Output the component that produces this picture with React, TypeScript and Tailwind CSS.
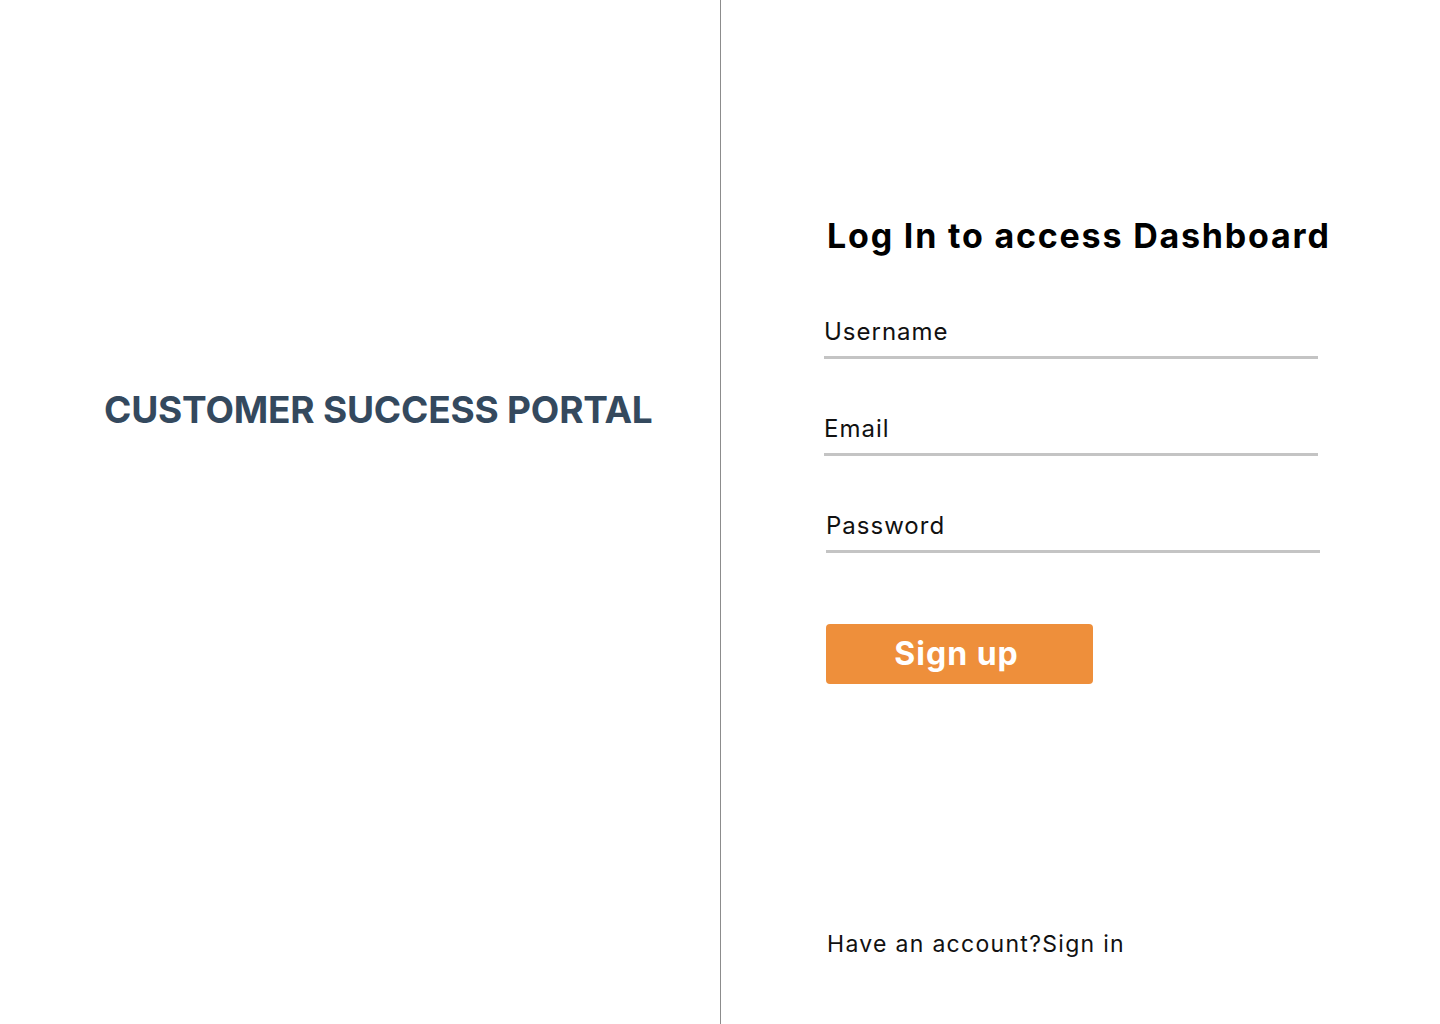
import { useState } from 'react';

export default function App() {
  const [username, setUsername] = useState('');
  const [email, setEmail] = useState('');
  const [password, setPassword] = useState('');

  const inputClass =
    "w-full bg-transparent border-b-[3px] border-[#c4c4c4] pt-[2px] pb-[9px] text-[24px] leading-[30px] tracking-[1px] text-[#111] outline-none placeholder:text-[#111]";

  return (
    <div className="flex h-[1024px] w-[1440px] bg-white font-['Inter',sans-serif] text-[#111]">
      {/* Left panel */}
      <div className="w-[721px] shrink-0 border-r border-[#8c8c8c] pl-[104px] pt-[386px]">
        <h1 className="text-[37px] leading-[48px] font-bold tracking-[-0.2px] text-[#34495e]">
          CUSTOMER SUCCESS PORTAL
        </h1>
      </div>

      {/* Right panel */}
      <div className="flex flex-1 flex-col pl-[103px] pt-[215px] pb-[65px]">
        <h2 className="pl-[3px] text-[34px] leading-[41px] font-bold tracking-[1.8px] text-black">
          Log In to access Dashboard
        </h2>

        <form className="mt-[59px] flex flex-col" onSubmit={(e) => e.preventDefault()}>
          <div className="w-[494px]">
            <input
              className={inputClass}
              placeholder="Username"
              value={username}
              onChange={(e) => setUsername(e.target.value)}
            />
          </div>
          <div className="mt-[53px] w-[494px]">
            <input
              className={inputClass}
              placeholder="Email"
              value={email}
              onChange={(e) => setEmail(e.target.value)}
            />
          </div>
          <div className="mt-[53px] ml-[2px] w-[494px]">
            <input
              type="password"
              className={inputClass}
              placeholder="Password"
              value={password}
              onChange={(e) => setPassword(e.target.value)}
            />
          </div>

          <button
            type="submit"
            className="mt-[71px] ml-[2px] h-[60px] w-[267px] rounded-[4px] bg-[#ee8f3b] pr-[6px] text-[32px] font-bold tracking-[1px] text-white"
          >
            Sign up
          </button>
        </form>

        <div className="mt-auto pl-[3px] text-[23px] leading-[30px] tracking-[1.3px] text-[#111]">
          Have an account?Sign in
        </div>
      </div>
    </div>
  );
}
